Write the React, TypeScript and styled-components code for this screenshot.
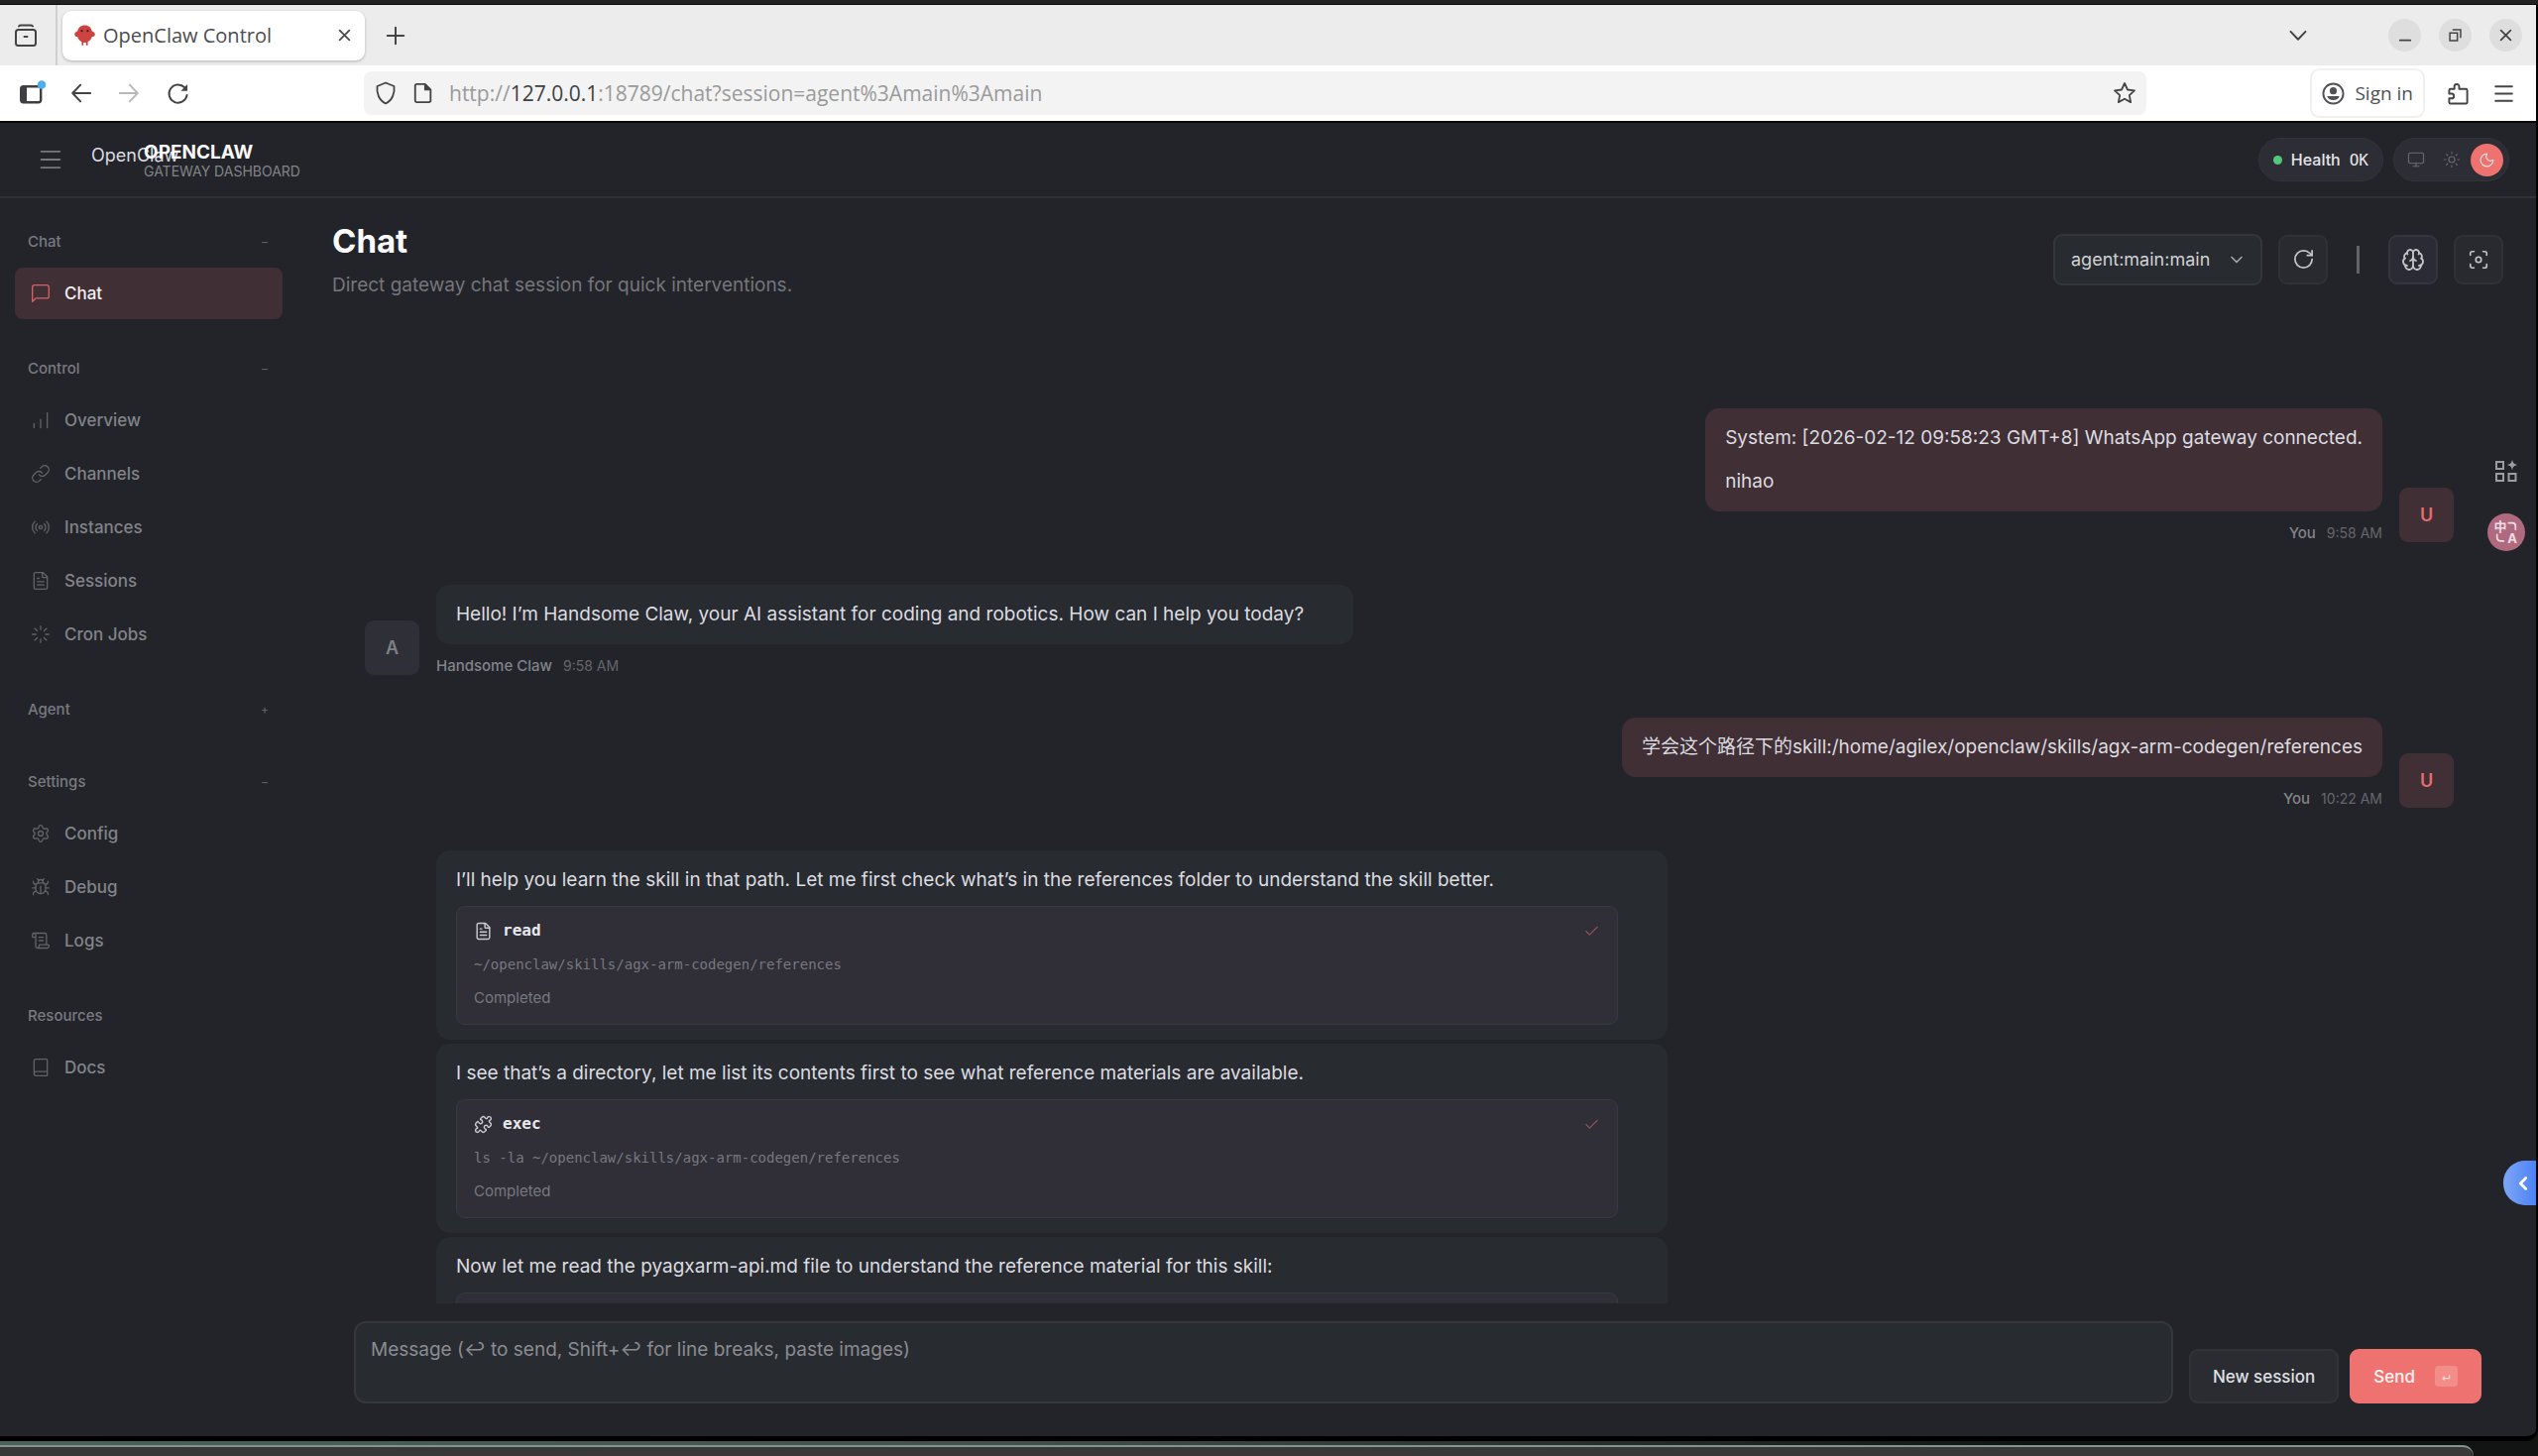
import React from "react";
import styled, { createGlobalStyle, css } from "styled-components";
import {
  Book, Brain, Bug, Check, ChevronDown, ChevronLeft, FileText, Focus, Link, Loader, Menu,
  Monitor, Moon, Puzzle, Radio, RotateCw, ScrollText, Settings, Sun,
} from "lucide-react";

const ui = `"Inter", "Noto Sans CJK SC", sans-serif`;
const mono = `"DejaVu Sans Mono", "Liberation Mono", monospace`;
const chrome = `"Open Sans", "Noto Sans", sans-serif`;

const c = {
  bg: "#232429",
  panel: "#282b30",
  card: "#302f38",
  line: "#36373c",
  text: "#dcdce0",
  strong: "#fafafa",
  muted: "#828388",
  dim: "#65666b",
  accent: "#ee7370",
  accentSoft: "#402f34",
};

const Global = createGlobalStyle`
  *, *::before, *::after { box-sizing: border-box; }
  body { margin: 0; background: #000; color: ${c.text}; font-family: ${ui}; }
  button, select, textarea, input { font: inherit; color: inherit; margin: 0; }
  button { border: 0; background: none; padding: 0; display: flex; align-items: center; justify-content: center; flex: none; }
  a { color: inherit; text-decoration: none; }
  h1, p, ul { margin: 0; padding: 0; }
  svg { display: block; flex: none; overflow: visible; }
`;

/* ---------- desktop and browser window ---------- */

const Desktop = styled.div`
  display: flex;
  flex-direction: column;
  height: 100vh;
  background: linear-gradient(90deg, #4a615c, #46504a 40%, #2c332f 60%, #121413 80%);
  overflow: hidden;
`;

const Window = styled.div`
  flex: 1;
  min-height: 0;
  display: flex;
  flex-direction: column;
  border: solid #000;
  border-width: 0 2px 5px 0;
  border-radius: 0 0 12px 0;
  background: ${c.bg};
  overflow: hidden;
  position: relative;
`;

const TopStrip = styled.div`
  height: 5px;
  flex: none;
  background: #222;
  border-bottom: 1px solid #0c0c0e;
`;

const Dock = styled.div`
  flex: none;
  height: 11px;
  margin: 4px 65px 0 0;
  background: #383838;
  border-top: 2px solid #7f958e;
  border-top-right-radius: 16px;
`;

const TabBar = styled.div`
  flex: none;
  height: 61px;
  display: flex;
  align-items: center;
  background: #ececec;
  color: #444;
`;

const ArchiveButton = styled.button`
  width: 58px;
  height: 100%;
  padding-right: 4px;
  border-right: 2px solid #cfcfcf;
`;

const Tab = styled.div`
  width: 305px;
  height: 50px;
  margin: 0 22px 0 5px;
  padding: 0 14px 0 12px;
  display: flex;
  align-items: center;
  gap: 8px;
  border-radius: 9px;
  background: #fff;
  box-shadow: 0 1px 3px rgba(0, 0, 0, 0.25);
  font: 20px/28px ${chrome};
  color: #4c4c50;
`;

const TabTitle = styled.span`
  flex: 1;
  white-space: nowrap;
`;

const Grow = styled.div`
  flex: 1;
`;

const WindowButtons = styled.div`
  display: flex;
  gap: 18px;
  padding: 0 14px 0 82px;
`;

const RoundButton = styled.button`
  width: 33px;
  height: 33px;
  border-radius: 50%;
  background: #dedede;
`;

const NavBar = styled.div`
  flex: none;
  height: 56px;
  display: flex;
  align-items: center;
  padding: 0 20px;
  background: #fff;
  color: #444;
`;

const NavButtons = styled.div`
  width: 347px;
  display: flex;
  align-items: center;
  gap: 28px;
`;

const NavButton = styled.button<{ $faded?: boolean }>`
  color: ${(p) => (p.$faded ? "#b9b9b9" : "#444")};
`;

const AddressBar = styled.div`
  width: 1798px;
  height: 44px;
  padding: 0 10px;
  display: flex;
  align-items: center;
  gap: 15px;
  border-radius: 8px;
  background: #f3f3f3;
`;

const Url = styled.a`
  flex: 1;
  font: 21px/28px ${chrome};
  color: #9a9a9a;
  white-space: nowrap;

  b {
    font-weight: 400;
    color: #3f3f43;
  }
`;

const SignIn = styled.button`
  height: 50px;
  padding: 0 10px;
  gap: 10px;
  border: 2px solid #f0f0f0;
  border-radius: 9px;
  font: 19px/26px ${chrome};
  color: #505055;
`;

const NavEnd = styled.div`
  display: flex;
  align-items: center;
  gap: 22px;
`;

/* ---------- application frame ---------- */

const AppShell = styled.div`
  flex: 1;
  min-height: 0;
  display: flex;
  flex-direction: column;
  border-top: 2px solid #08080a;
`;

const Header = styled.header`
  flex: none;
  height: 76px;
  display: flex;
  align-items: center;
  padding: 0 27px 0 37px;
  border-bottom: 2px solid #313237;
`;

const MenuButton = styled.button`
  width: 28px;
  height: 40px;
  color: #77787d;
`;

const Brand = styled.div`
  display: flex;
  margin-left: 27px;
  padding-top: 2px;
  gap: 15px;
`;

const LogoText = styled.span`
  width: 38px;
  height: 38px;
  font-size: 18px;
  line-height: 28px;
  white-space: nowrap;
`;

const BrandName = styled.div`
  font-size: 19px;
  font-weight: 700;
  line-height: 22px;
  color: ${c.strong};
`;

const BrandSub = styled.div`
  font-size: 14px;
  line-height: 16px;
  color: ${c.muted};
  white-space: nowrap;
`;

const Pill = styled.div`
  height: 44px;
  display: flex;
  align-items: center;
  border: 1px solid #33343a;
  border-radius: 22px;
  background: #2d2e35;
`;

const HealthPill = styled(Pill)`
  padding: 0 14px;
  gap: 9px;
  margin-right: 10px;
  font-size: 16px;
  font-weight: 500;
  color: #e6e6ea;

  i {
    width: 9px;
    height: 9px;
    border-radius: 50%;
    background: #53c87c;
  }

  code {
    font: 16px ${mono};
  }
`;

const ThemePill = styled(Pill)`
  padding: 0 5px;
  gap: 3px;
`;

const ThemeButton = styled.button<{ $on?: boolean }>`
  width: 33px;
  height: 33px;
  border-radius: 50%;
  color: ${(p) => (p.$on ? "#fde4e3" : "#696a71")};
  background: ${(p) => (p.$on ? c.accent : "transparent")};
`;

const Body = styled.div`
  flex: 1;
  min-height: 0;
  display: flex;
`;

const Sidebar = styled.nav`
  flex: none;
  width: 300px;
  padding: 19px 15px;
  display: flex;
  flex-direction: column;
  gap: 25px;
`;

const Section = styled.div`
  display: flex;
  flex-direction: column;
`;

const SectionHead = styled.button`
  height: 48px;
  padding: 0 14px 0 13px;
  margin-bottom: 3px;
  justify-content: space-between;
  font-size: 15px;
  font-weight: 500;
  color: #797a80;

  span {
    font-size: 12px;
    color: #5e5f65;
  }
`;

const ClosedSection = styled(Section)`
  ${SectionHead} {
    margin-bottom: 0;
  }
`;

const NavList = styled.ul`
  list-style: none;
  display: flex;
  flex-direction: column;
  gap: 2px;
`;

const NavItem = styled.a<{ $active?: boolean }>`
  height: 52px;
  padding: 0 16px;
  display: flex;
  align-items: center;
  gap: 14px;
  border-radius: 8px;
  font-size: 17px;
  font-weight: 500;
  color: ${c.muted};

  svg {
    color: #616268;
  }

  ${(p) =>
    p.$active &&
    css`
      color: #f2eef0;
      background: ${c.accentSoft};
      svg {
        color: #cf6468;
      }
    `}
`;

const Main = styled.main`
  flex: 1;
  min-width: 0;
  display: flex;
  flex-direction: column;
  padding: 23px 33px 33px 35px;
`;

const PageHead = styled.div`
  flex: none;
  display: flex;
  align-items: center;
  justify-content: space-between;
`;

const Title = styled.h1`
  font-size: 33px;
  font-weight: 700;
  line-height: 40px;
  color: ${c.strong};
`;

const Subtitle = styled.p`
  margin-top: 13px;
  font-size: 19px;
  line-height: 24px;
  color: #75767b;
`;

const Controls = styled.div`
  display: flex;
  align-items: center;
  gap: 16px;
`;

const SelectBox = styled.label`
  display: grid;
  align-items: center;
  width: 211px;
  height: 52px;

  select,
  svg {
    grid-area: 1 / 1;
  }

  select {
    appearance: none;
    width: 100%;
    height: 100%;
    padding: 0 40px 0 16px;
    border: 2px solid #34363b;
    border-radius: 9px;
    background: ${c.panel};
    font-size: 18px;
    color: #d0d1d6;
  }

  svg {
    justify-self: end;
    margin-right: 16px;
    color: #a5a6ab;
    pointer-events: none;
  }
`;

const ToolButton = styled.button<{ $on?: boolean }>`
  width: 50px;
  height: 50px;
  border: 2px solid ${(p) => (p.$on ? "#34353f" : "#303136")};
  border-radius: 9px;
  background: ${(p) => (p.$on ? "#2a2b34" : "#292a2f")};
  color: #c4c5c9;
`;

const Divider = styled.div`
  width: 3px;
  height: 28px;
  margin: 0 13px;
  background: #62636a;
`;

/* ---------- conversation ---------- */

const Thread = styled.div`
  flex: 1;
  min-height: 0;
  overflow: hidden;
  display: flex;
  flex-direction: column;
  gap: 43px;
  padding: 112px 50px 0 33px;
`;

const Message = styled.article<{ $mine?: boolean }>`
  flex: none;
  display: flex;
  flex-direction: ${(p) => (p.$mine ? "row-reverse" : "row")};
  align-items: flex-end;
  gap: 17px;
`;

const Avatar = styled.div<{ $mine?: boolean }>`
  flex: none;
  width: 55px;
  height: 55px;
  display: grid;
  place-items: center;
  border-radius: 9px;
  font-size: 18px;
  font-weight: 600;
  background: ${(p) => (p.$mine ? c.accentSoft : "#2e2f37")};
  color: ${(p) => (p.$mine ? "#e76d6d" : "#7f8087")};
`;

const Stack = styled.div<{ $mine?: boolean; $wide?: boolean }>`
  display: flex;
  flex-direction: column;
  align-items: ${(p) => (p.$wide ? "stretch" : p.$mine ? "flex-end" : "flex-start")};
  gap: 4px;
  ${(p) => p.$wide && "width: 1242px; max-width: 100%;"}
`;

const Bubble = styled.div<{ $mine?: boolean }>`
  display: flex;
  flex-direction: column;
  gap: 14px;
  padding: ${(p) => (p.$mine ? "15px 20px" : "15px 50px 15px 20px")};
  border-radius: 14px;
  background: ${(p) => (p.$mine ? c.accentSoft : c.panel)};
  font-size: 19px;
  line-height: 30px;
  color: ${c.text};
`;

const Meta = styled.div`
  margin-top: 9px;
  display: flex;
  gap: 11px;
  font-size: 15px;
  line-height: 18px;
  font-weight: 500;
  color: ${c.muted};

  time {
    font-size: 14px;
    font-weight: 400;
    color: ${c.dim};
  }
`;

const ToolCard = styled.div`
  display: flex;
  flex-direction: column;
  gap: 12px;
  min-height: 120px;
  padding: 13px 17px 15px;
  border: 1px solid #393a40;
  border-radius: 9px;
  background: ${c.card};
  font-size: 15px;
  line-height: 22px;
  color: #77787e;

  code {
    font: 14px/22px ${mono};
  }
`;

const ToolHead = styled.div`
  display: flex;
  align-items: center;
  gap: 10px;
  color: #c9c9ce;

  strong {
    flex: 1;
    font: 700 16px/22px ${mono};
    color: #e8e8ec;
  }
`;

const ToolBubble = styled(Bubble)`
  gap: 11px;
`;

const Composer = styled.form`
  flex: none;
  display: flex;
  align-items: flex-end;
  padding: 18px 22px 0;
`;

const MessageBox = styled.textarea`
  flex: 1;
  height: 83px;
  margin-right: 16px;
  padding: 14px 15px;
  border: 2px solid ${c.line};
  border-radius: 12px;
  background: ${c.panel};
  font-size: 19px;
  line-height: 26px;
  resize: none;

  &::placeholder {
    color: #8b8c91;
    opacity: 1;
  }
`;

const ActionButton = styled.button<{ $primary?: boolean }>`
  height: 55px;
  padding: 0 22px;
  gap: 20px;
  border: 2px solid ${(p) => (p.$primary ? c.accent : "#313338")};
  border-radius: 9px;
  margin-left: ${(p) => (p.$primary ? "11px" : "0")};
  background: ${(p) => (p.$primary ? c.accent : "#2a2c32")};
  font-size: 17px;
  font-weight: 500;
  color: ${(p) => (p.$primary ? "#fff3f2" : "#dfe0e4")};

  kbd {
    width: 23px;
    height: 21px;
    border-radius: 4px;
    background: #f28d8a;
    font: 14px/21px ${mono};
    color: #fbd9d7;
  }
`;

/* ---------- floating extension widgets ---------- */

const GridWidget = styled.button`
  position: absolute;
  top: 458px;
  right: 18px;
  color: #9c9da0;
`;

const TranslateWidget = styled.button`
  position: absolute;
  top: 513px;
  right: 11px;
  width: 38px;
  height: 38px;
  border-radius: 50%;
  background: #af6a80;
  color: #f0dbe2;
  display: grid;
  grid-template: 12px 12px / 12px 12px;
  place-content: center;
  place-items: center;
  font-size: 13px;
  font-weight: 700;
  line-height: 12px;
`;

const DrawerHandle = styled.button`
  position: absolute;
  top: 1166px;
  right: 0;
  width: 33px;
  height: 45px;
  border-radius: 22px 0 0 22px;
  background: linear-gradient(90deg, #7ea6f5, #4c82f5);
  color: #fff;
  padding-left: 6px;
`;

/* ---------- drawings ---------- */

const Svg = ({ size = 22, box = 24, sw = 2, children }: { size?: number; box?: number; sw?: number; children: React.ReactNode }) => (
  <svg width={size} height={size} viewBox={`0 0 ${box} ${box}`} fill="none" stroke="currentColor" strokeWidth={sw} strokeLinecap="round" strokeLinejoin="round" aria-hidden>
    {children}
  </svg>
);

const Favicon = () => (
  <svg width="21" height="21" viewBox="0 0 24 24" aria-hidden>
    <path d="M12 .5c5 0 7.600 3 8.200 6.500 2.200.9 3.600 2.400 3.600 4 0 1.700-1.600 2.600-3.400 2.700-.9 3-2.500 4.800-4.900 6v4h-2v-3.200h-3v3.200h-2v-4c-2.400-1.200-4-3-4.900-6C1.800 13.600.2 12.700.2 11c0-1.600 1.400-3.100 3.600-4C4.400 3.500 7 .5 12 .5z" fill="#cc4341" />
    <circle cx="8.600" cy="7" r="1.300" fill="#4a1a1c" />
    <circle cx="15.400" cy="7" r="1.300" fill="#4a1a1c" />
  </svg>
);

const ArchiveIcon = () => (
  <Svg size={24}>
    <path d="M5 2.500C5.500 1.800 6 1.500 7 1.500h10c1 0 1.500.3 2 1" />
    <rect x="2" y="6" width="20" height="16" rx="2.500" />
    <path d="M10.500 13h3" />
  </Svg>
);

const SidebarIcon = () => (
  <svg width="24" height="26" viewBox="0 0 24 26" fill="none" aria-hidden>
    <rect x="1.200" y="6.200" width="20" height="16" rx="2.500" stroke="#3f3f43" strokeWidth="2.400" />
    <path d="M2 7h5v14H2z" fill="#3f3f43" />
    <circle cx="22" cy="4.500" r="4.300" fill="#4fb0e8" />
  </svg>
);

const ReloadIcon = () => (
  <Svg size={23}>
    <path d="M21.500 13.500A9.500 9.500 0 1 1 19 5.500" />
    <path d="M22 2v7h-7z" fill="currentColor" stroke="none" />
  </Svg>
);

const ShieldIcon = () => (
  <Svg size={24} sw={1.8}>
    <path d="M12 1.500 3.500 5C2.500 12 5.500 19.500 12 22.500 18.500 19.500 21.500 12 20.500 5z" />
  </Svg>
);

const PageIcon = () => (
  <Svg size={22}>
    <path d="M5 2h9l6 6v12a2 2 0 0 1-2 2H5a2 2 0 0 1-2-2V4a2 2 0 0 1 2-2z" />
    <path d="M13 1v8h8z" fill="currentColor" stroke="none" />
  </Svg>
);

const StarIcon = () => (
  <Svg size={24} sw={1.8}>
    <path d="M12 2l3 6.500 7 .8-5.200 4.800 1.400 7L12 17.700 5.800 21.100l1.400-7L2 9.300l7-.8z" />
  </Svg>
);

const AccountIcon = () => (
  <Svg size={23}>
    <circle cx="12" cy="12" r="10.500" />
    <circle cx="12" cy="9" r="3.700" fill="currentColor" stroke="none" />
    <path d="M5.500 14.500h13c-.6 2.600-3.300 4.200-6.500 4.200s-5.900-1.600-6.500-4.200z" fill="currentColor" stroke="none" />
  </Svg>
);

const ExtensionIcon = () => (
  <Svg size={23}>
    <path d="M8 6V4.500a2.500 2.500 0 0 1 5 0V7h7a1.500 1.500 0 0 1 1.500 1.500V21a1.500 1.500 0 0 1-1.500 1.500H4A1.500 1.500 0 0 1 2.500 21v-4H5a2.500 2.500 0 0 0 0-5H2.500V8.500A1.500 1.500 0 0 1 4 7h4z" />
  </Svg>
);

const RestoreIcon = () => (
  <Svg size={13} box={12} sw={1.4}>
    <path d="M1 4h7v7H1zM4 1h7v7" strokeLinejoin="miter" />
  </Svg>
);

const BarsIcon = () => (
  <Svg size={20} sw={1.6}>
    <path d="M4 21v-5M12 21V11M20 21V3" />
  </Svg>
);

const ChatIcon = () => (
  <Svg size={20} sw={1.6}>
    <path d="M22 15.500a2.300 2.300 0 0 1-2.300 2.300H6.500L2 22V4.300A2.300 2.300 0 0 1 4.300 2h15.400A2.300 2.300 0 0 1 22 4.300z" />
  </Svg>
);

const GridPlusIcon = () => (
  <Svg size={24} sw={2}>
    <path d="M2 3h7v7H2zM2 15h7v7H2zM14.500 15h7v7h-7z" strokeLinejoin="miter" />
    <path d="M18 .5c.6 3.600 1.800 4.800 5.500 5.500-3.700.7-4.900 1.900-5.500 5.500-.6-3.600-1.800-4.800-5.500-5.500C16.200 5.300 17.400 4.100 18 .5z" fill="currentColor" stroke="none" />
  </Svg>
);

/* ---------- data ---------- */

const thin = { size: 20, strokeWidth: 1.6 };

type Item = { label: string; icon: React.ReactNode; active?: boolean };

const sections: { name: string; mark: string; items: Item[] }[] = [
  { name: "Chat", mark: "−", items: [{ label: "Chat", icon: <ChatIcon />, active: true }] },
  {
    name: "Control",
    mark: "−",
    items: [
      { label: "Overview", icon: <BarsIcon /> },
      { label: "Channels", icon: <Link {...thin} /> },
      { label: "Instances", icon: <Radio {...thin} /> },
      { label: "Sessions", icon: <FileText {...thin} /> },
      { label: "Cron Jobs", icon: <Loader {...thin} /> },
    ],
  },
  { name: "Agent", mark: "+", items: [] },
  {
    name: "Settings",
    mark: "−",
    items: [
      { label: "Config", icon: <Settings {...thin} /> },
      { label: "Debug", icon: <Bug {...thin} /> },
      { label: "Logs", icon: <ScrollText {...thin} /> },
    ],
  },
  { name: "Resources", mark: "", items: [{ label: "Docs", icon: <Book {...thin} /> }] },
];

type Step = { text: string; tool?: string; icon?: React.ReactNode; detail?: string };

const steps: Step[] = [
  {
    text: "I’ll help you learn the skill in that path. Let me first check what’s in the references folder to understand the skill better.",
    tool: "read",
    icon: <FileText size={19} strokeWidth={1.8} />,
    detail: "~/openclaw/skills/agx-arm-codegen/references",
  },
  {
    text: "I see that’s a directory, let me list its contents first to see what reference materials are available.",
    tool: "exec",
    icon: <Puzzle size={19} strokeWidth={1.8} />,
    detail: "ls -la ~/openclaw/skills/agx-arm-codegen/references",
  },
  {
    text: "Now let me read the pyagxarm-api.md file to understand the reference material for this skill:",
  },
];

const UserMessage = ({ time, children }: { time: string; children: React.ReactNode }) => (
  <Message $mine>
    <Avatar $mine>U</Avatar>
    <Stack $mine>
      <Bubble $mine>{children}</Bubble>
      <Meta>
        You <time>{time}</time>
      </Meta>
    </Stack>
  </Message>
);

export default function App() {
  return (
    <Desktop>
      <Global />
      <TopStrip />
      <Window>
        <TabBar>
          <ArchiveButton aria-label="Recent browsing"><ArchiveIcon /></ArchiveButton>
          <Tab>
            <Favicon />
            <TabTitle>OpenClaw Control</TabTitle>
            <button aria-label="Close tab"><Svg size={13}><path d="M3 3l18 18M21 3 3 21" strokeWidth="3.400" /></Svg></button>
          </Tab>
          <button aria-label="New tab"><Svg size={18}><path d="M12 1v22M1 12h22" strokeWidth="2.600" /></Svg></button>
          <Grow />
          <button aria-label="List all tabs"><Svg size={18}><path d="M2 6.500l10 10.500L22 6.500" strokeWidth="2.600" /></Svg></button>
          <WindowButtons>
            <RoundButton aria-label="Minimize"><Svg size={14}><path d="M3 20h18" strokeWidth="3" /></Svg></RoundButton>
            <RoundButton aria-label="Restore"><RestoreIcon /></RoundButton>
            <RoundButton aria-label="Close"><Svg size={13}><path d="M3 3l18 18M21 3 3 21" strokeWidth="3.400" /></Svg></RoundButton>
          </WindowButtons>
        </TabBar>
        <NavBar>
          <NavButtons>
            <NavButton aria-label="Sidebar"><SidebarIcon /></NavButton>
            <NavButton aria-label="Back"><Svg size={20}><path d="M23 12H2M11 2 1.500 12 11 22" strokeWidth="2.400" /></Svg></NavButton>
            <NavButton aria-label="Forward" $faded><Svg size={20}><path d="M1 12h21M13 2l9.500 10L13 22" strokeWidth="2.400" /></Svg></NavButton>
            <NavButton aria-label="Reload"><ReloadIcon /></NavButton>
          </NavButtons>
          <AddressBar>
            <ShieldIcon />
            <PageIcon />
            <Url href="#"><span>http://</span><b>127.0.0.1</b><span>:18789/chat?session=agent%3Amain%3Amain</span></Url>
            <button aria-label="Bookmark"><StarIcon /></button>
          </AddressBar>
          <Grow />
          <NavEnd>
            <SignIn><AccountIcon />Sign in</SignIn>
            <NavButton aria-label="Extensions"><ExtensionIcon /></NavButton>
            <NavButton aria-label="Menu"><Menu size={25} strokeWidth={1.8} /></NavButton>
          </NavEnd>
        </NavBar>

        <AppShell>
          <Header>
            <MenuButton aria-label="Toggle menu"><Menu size={28} strokeWidth={1.6} /></MenuButton>
            <Brand>
              <LogoText>OpenClaw</LogoText>
              <div>
                <BrandName>OPENCLAW</BrandName>
                <BrandSub>GATEWAY DASHBOARD</BrandSub>
              </div>
            </Brand>
            <Grow />
            <HealthPill><i /><span>Health</span><code>OK</code></HealthPill>
            <ThemePill>
              <ThemeButton aria-label="System theme"><Monitor size={18} strokeWidth={1.6} /></ThemeButton>
              <ThemeButton aria-label="Light theme"><Sun size={18} strokeWidth={1.6} /></ThemeButton>
              <ThemeButton aria-label="Dark theme" $on><Moon size={17} strokeWidth={1.6} /></ThemeButton>
            </ThemePill>
          </Header>

          <Body>
            <Sidebar>
              {sections.map((s) => {
                const Wrap = s.items.length ? Section : ClosedSection;
                return (
                  <Wrap key={s.name}>
                    <SectionHead>{s.name}<span>{s.mark}</span></SectionHead>
                    {s.items.length > 0 && (
                      <NavList>
                        {s.items.map((it) => (
                          <li key={it.label}><NavItem href="#" $active={it.active}>{it.icon}{it.label}</NavItem></li>
                        ))}
                      </NavList>
                    )}
                  </Wrap>
                );
              })}
            </Sidebar>

            <Main>
              <PageHead>
                <div>
                  <Title>Chat</Title>
                  <Subtitle>Direct gateway chat session for quick interventions.</Subtitle>
                </div>
                <Controls>
                  <SelectBox>
                    <select aria-label="Session" defaultValue="main">
                      <option value="main">agent:main:main</option>
                    </select>
                    <ChevronDown size={20} strokeWidth={2} />
                  </SelectBox>
                  <ToolButton aria-label="Refresh"><RotateCw size={23} strokeWidth={1.8} /></ToolButton>
                  <Divider />
                  <ToolButton aria-label="Show thinking" $on><Brain size={24} strokeWidth={1.8} /></ToolButton>
                  <ToolButton aria-label="Focus mode"><Focus size={22} strokeWidth={1.8} /></ToolButton>
                </Controls>
              </PageHead>

              <Thread>
                <UserMessage time="9:58 AM">
                  <p>System: [2026-02-12 09:58:23 GMT+8] WhatsApp gateway connected.</p>
                  <p>nihao</p>
                </UserMessage>

                <Message>
                  <Avatar>A</Avatar>
                  <Stack>
                    <Bubble><p>Hello! I’m Handsome Claw, your AI assistant for coding and robotics. How can I help you today?</p></Bubble>
                    <Meta>Handsome Claw <time>9:58 AM</time></Meta>
                  </Stack>
                </Message>

                <UserMessage time="10:22 AM">
                  <p>学会这个路径下的skill:/home/agilex/openclaw/skills/agx-arm-codegen/references</p>
                </UserMessage>

                <Message>
                  <Avatar />
                  <Stack $wide>
                    {steps.map((s) => (
                      <ToolBubble key={s.text}>
                        <p>{s.text}</p>
                        <ToolCard>
                          {s.tool && (
                            <>
                              <ToolHead>{s.icon}<strong>{s.tool}</strong><Check size={17} strokeWidth={1.6} color="#8f5558" /></ToolHead>
                              <code>{s.detail}</code>
                              <span>Completed</span>
                            </>
                          )}
                        </ToolCard>
                      </ToolBubble>
                    ))}
                  </Stack>
                </Message>
              </Thread>

              <Composer onSubmit={(e) => e.preventDefault()}>
                <MessageBox aria-label="Message" placeholder="Message (↩ to send, Shift+↩ for line breaks, paste images)" />
                <ActionButton type="button">New session</ActionButton>
                <ActionButton $primary>Send<kbd>↵</kbd></ActionButton>
              </Composer>
            </Main>
          </Body>
        </AppShell>

        <GridWidget aria-label="Extension tools"><GridPlusIcon /></GridWidget>
        <TranslateWidget aria-label="Translate">
          <span>中</span>
          <Svg size={10}><path d="M3 4h10c4 0 7 3 7 8v8" strokeWidth="4" /></Svg>
          <Svg size={10}><path d="M4 3v6c0 6 4 10 10 10h6" strokeWidth="4" /></Svg>
          <span>A</span>
        </TranslateWidget>
        <DrawerHandle aria-label="Open side panel"><ChevronLeft size={22} strokeWidth={3} /></DrawerHandle>
      </Window>
      <Dock />
    </Desktop>
  );
}
